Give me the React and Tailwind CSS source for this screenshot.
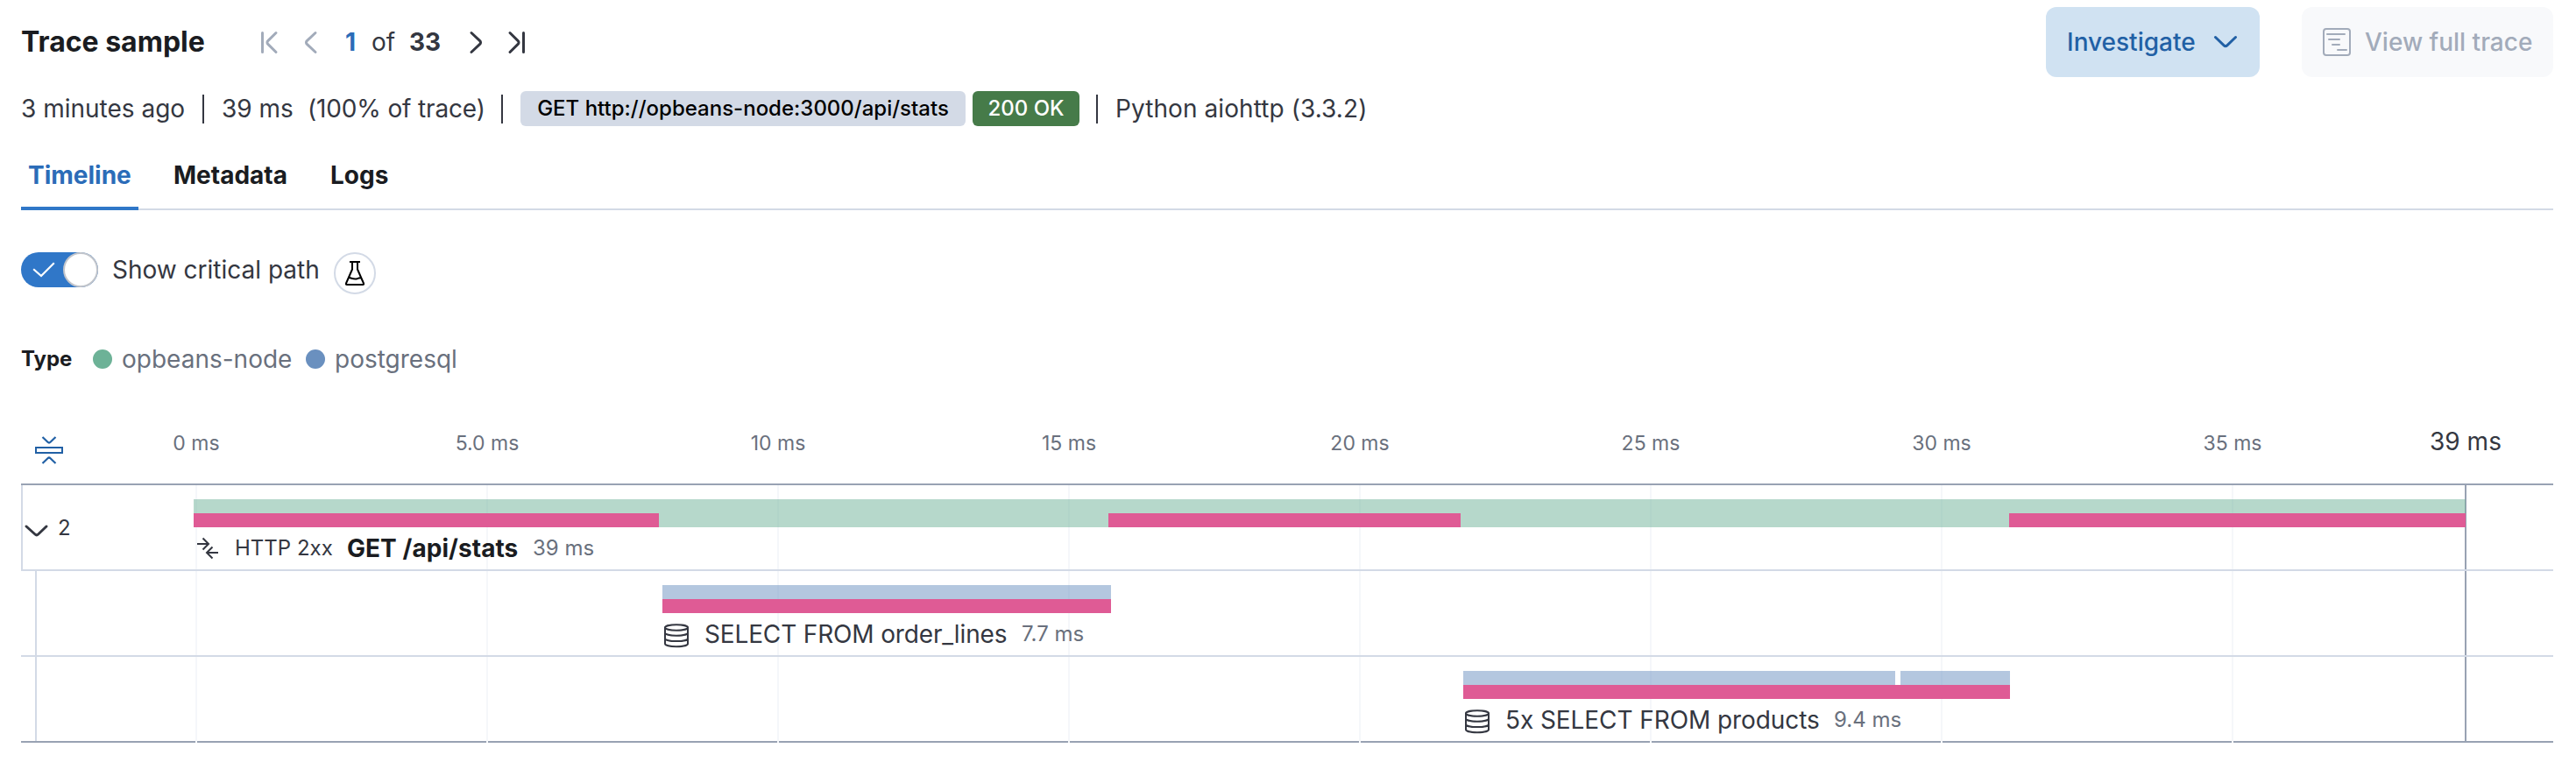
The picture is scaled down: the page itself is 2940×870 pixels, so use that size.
import React from "react";

const ticks = [
  { label: "0 ms", x: 224 },
  { label: "5.0 ms", x: 556 },
  { label: "10 ms", x: 888 },
  { label: "15 ms", x: 1220 },
  { label: "20 ms", x: 1552 },
  { label: "25 ms", x: 1884 },
  { label: "30 ms", x: 2216 },
  { label: "35 ms", x: 2548 },
];

function Icon({ w, h, sw = 3, className = "", cap = "round", children }) {
  return (
    <svg
      width={w}
      height={h}
      viewBox={`0 0 ${w} ${h}`}
      fill="none"
      stroke="currentColor"
      strokeWidth={sw}
      strokeLinecap={cap}
      strokeLinejoin="round"
      className={`block shrink-0 ${className}`}
    >
      {children}
    </svg>
  );
}

function Divider() {
  return <span className="h-[33px] w-0.5 shrink-0 bg-[#343741]" />;
}

function Header() {
  return (
    <header className="flex h-20 items-center">
      <h1 className="w-[272px] whitespace-nowrap text-[32px] font-bold leading-10 text-[#1a1c21]">Trace sample</h1>
      <Icon w={24} h={32} className="text-[#a2abba]">
        <path d="M3.5 5.5v22M19 5.5 9.8 14.6a2.6 2.6 0 0 0 0 3.8L19 27.5" />
      </Icon>
      <Icon w={24} h={32} className="ml-[25px] text-[#a2abba]">
        <path d="M15 5.5 5.3 14.6a2.6 2.6 0 0 0 0 3.8L15 27.5" />
      </Icon>
      <div className="ml-[25px] flex whitespace-nowrap text-[28px] leading-10 text-[#343741]">
        <span className="w-[30px] font-bold text-[#2b6cb8]">1</span>
        <span className="w-[43px]">of</span>
        <span className="w-[66px] font-bold">33</span>
      </div>
      <Icon w={24} h={32} className="text-[#343741]">
        <path d="M5 5.5 14.7 14.6a2.6 2.6 0 0 1 0 3.8L5 27.5" />
      </Icon>
      <Icon w={24} h={32} className="ml-[20px] text-[#343741]">
        <path d="M5 5.5 14.2 14.6a2.6 2.6 0 0 1 0 3.8L5 27.5M20.5 5.5v22" />
      </Icon>
      <div className="ml-auto flex gap-12">
        <button className="flex h-20 w-[244px] items-center rounded-xl bg-[#d0e2f2] pl-6 text-[28px] font-medium text-[#2160a5]">
          <span className="w-[165px] whitespace-nowrap text-left">Investigate</span>
          <Icon w={32} h={32} sw={3}>
            <path d="M4.500 10.500 14.200 19.800a2.600 2.600 0 0 0 3.600 0L27.500 10.500" />
          </Icon>
        </button>
        <button className="flex h-20 w-[287px] items-center rounded-xl bg-[#f8f9fb] pl-6 text-[28px] font-medium text-[#a2abba]">
          <Icon w={32} h={32} sw={2}>
            <rect x="1" y="1" width="30" height="30" rx="3" />
            <path d="M5 7h20M7 13h12M11 19h8M17 25h10" />
          </Icon>
          <span className="ml-4 whitespace-nowrap">View full trace</span>
        </button>
      </div>
    </header>
  );
}

function Summary() {
  return (
    <div className="mt-4 flex h-10 items-center whitespace-nowrap text-[28px] leading-10 text-[#343741]">
      <span className="w-[207px]">3 minutes ago</span>
      <Divider />
      <span className="ml-5 w-[98px]">39 ms</span>
      <span className="w-[221px] tracking-[-0.15px]">(100% of trace)</span>
      <Divider />
      <span className="ml-5 h-10 w-[508px] rounded-md bg-[#d3dae6] text-center text-2xl font-medium leading-10 text-black">
        GET http://opbeans-node:3000/api/stats
      </span>
      <span className="ml-2 h-10 w-[122px] rounded-md bg-[#467b49] text-center text-2xl font-medium leading-10 text-white">
        200 OK
      </span>
      <span className="ml-[19px] mr-5 h-[33px] w-0.5 bg-[#343741]" />
      <span className="tracking-[0.08px]">Python aiohttp (3.3.2)</span>
    </div>
  );
}

function Tabs() {
  return (
    <nav className="mt-4 flex h-20 gap-10 whitespace-nowrap text-[28px] font-bold leading-[80px] text-[#1a1c21] shadow-[inset_0_-2px_0_#d3dae6]">
      <a className="w-[134px] px-2 text-[#2b6cb8] shadow-[inset_0_-4px_0_#3077c8]">Timeline</a>
      <a className="w-[139px]">Metadata</a>
      <a>Logs</a>
    </nav>
  );
}

function CriticalPathSwitch() {
  return (
    <div className="mt-12 flex h-12 items-start">
      <div className="flex h-10 w-[88px] items-center rounded-full bg-[#3077c8]">
        <Icon w={48} h={40} sw={2.2} cap="square" className="text-white">
          <path d="m15 20 8 7L37 13" strokeLinejoin="miter" />
        </Icon>
        <span className="size-10 rounded-full border-2 border-[#c2c5cb] bg-white" />
      </div>
      <span className="ml-4 w-[253px] whitespace-nowrap text-[28px] leading-10 text-[#343741]">Show critical path</span>
      <span className="flex size-12 items-center justify-center rounded-full border-2 border-[#d3dae6] text-black">
        <Icon w={24} h={28} sw={2} cap="square">
          <path d="M7 1h10M9 1v8.500L2 25.500c-.4 1 0 1.500 1 1.500h18c1 0 1.400-.5 1-1.500L15 9.500V1" />
          <path d="M5.500 19c4.500 1.200 6 2.200 9 1.200 1.500-.5 2-.7 4-1" />
        </Icon>
      </span>
    </div>
  );
}

function Legend() {
  return (
    <div className="mt-[54px] flex h-10 items-center whitespace-nowrap text-[28px] leading-10 text-[#69707d]">
      <span className="w-[82px] text-2xl font-bold text-[#1a1c21]">Type</span>
      <span className="size-[22px] rounded-full bg-[#6db297]" />
      <span className="ml-[11px] w-[210px]">opbeans-node</span>
      <span className="size-[22px] rounded-full bg-[#6a90bf]" />
      <span className="ml-[11px]">postgresql</span>
    </div>
  );
}

function DbIcon() {
  return (
    <Icon w={32} h={32} sw={2}>
      <ellipse cx="16" cy="8.500" rx="13" ry="3.200" />
      <path d="M3 8.500v18.500c0 1.800 5.800 3.200 13 3.200s13-1.400 13-3.200V8.500M3 14.500c0 1.800 5.800 3.200 13 3.200s13-1.400 13-3.200M3 20.900c0 1.800 5.800 3.200 13 3.200s13-1.400 13-3.200" />
    </Icon>
  );
}

/* A span on the time axis: colour on top, its critical segments underneath. */
function Bar({ left, width, color, segments, gap }) {
  return (
    <div className={`relative h-8 ${color}`} style={{ marginLeft: left, width }}>
      {gap && <span className="absolute top-0 h-4 w-1.5 bg-white" style={{ left: gap }} />}
      {segments.map(([x, w]) => (
        <span key={x} className="absolute top-4 h-4 bg-[#df5b95]" style={{ left: x, width: w }} />
      ))}
    </div>
  );
}

function Axis() {
  return (
    <div className="relative mt-[50px] h-[72px]">
      <Icon w={32} h={32} sw={2.2} className="ml-4 translate-y-[18px] text-[#2160a5]" cap="butt">
        <path d="m8.500 1 6 5.800a2.200 2.200 0 0 0 3 0l6-5.800M8.500 31l6-5.800a2.200 2.200 0 0 1 3 0l6 5.800" />
        <rect x="1" y="13" width="30" height="6" strokeWidth="2" strokeLinejoin="miter" />
      </Icon>
      {ticks.map((t) => (
        <span
          key={t.label}
          className="absolute top-[10px] -translate-x-1/2 whitespace-nowrap text-[23px] leading-8 text-[#69707d]"
          style={{ left: t.x - 24 }}
        >
          {t.label}
        </span>
      ))}
      <span className="absolute left-[2790px] top-2 -translate-x-1/2 whitespace-nowrap text-[28px] leading-8 text-[#343741]">
        39 ms
      </span>
    </div>
  );
}

function Waterfall() {
  return (
    <section className="relative h-[296px] border-y-2 border-[#98a2b3]">
      <div className="absolute inset-x-0 top-0 h-[294px]">
        {ticks.map((t) => (
          <span key={t.label} className="absolute inset-y-0 w-0.5 bg-[#f5f7fa]" style={{ left: t.x - 25 }} />
        ))}
        <span className="absolute left-[2789px] top-0 h-[292px] w-0.5 bg-[#98a2b3]" />
      </div>

      <div className="relative flex h-[98px] border-b-2 border-l-2 border-[#d3dae6]">
        <div className="flex w-[195px] items-center pt-1 text-2xl leading-8 text-[#343741]">
          <Icon w={32} h={32} sw={3} className="translate-y-[2px]">
            <path d="m4 11 10 9a2.600 2.600 0 0 0 3.600 0l9.400-9" />
          </Icon>
          <span className="ml-2 -translate-y-px">2</span>
        </div>
        <div className="pt-4">
          <Bar
            left={0}
            width={2593}
            color="bg-[#6db297]/50"
            segments={[
              [0, 531],
              [1044, 402],
              [2072, 521],
            ]}
          />
          <div className="flex h-12 items-center whitespace-nowrap text-2xl leading-[42px] text-[#343741]">
            <Icon w={32} h={32} sw={2} cap="butt" className="-translate-y-px">
              <path d="M4 12h13M10.500 5.500 17 12l-6.500 6.500M28 22H15M21.500 15.500 15 22l6.500 6.500" strokeLinejoin="miter" />
            </Icon>
            <span className="ml-[15px] w-[128px]">HTTP 2xx</span>
            <span className="w-[212px] text-[28px] font-bold leading-[42px] tracking-[0.05px] text-[#1a1c21]">
              GET /api/stats
            </span>
            <span className="text-[#69707d]">39 ms</span>
          </div>
        </div>
      </div>

      <div className="relative flex h-[98px] border-b-2 border-[#d3dae6] pl-4">
        <div className="border-l-2 border-[#d3dae6] pt-4">
          <Bar left={714} width={512} color="bg-[#6a90bf]/50" segments={[[0, 512]]} />
          <div className="ml-[714px] flex h-12 items-center whitespace-nowrap text-[28px] text-[#343741]">
            <DbIcon />
            <span className="ml-4 w-[362px] tracking-[-0.15px]">SELECT FROM order_lines</span>
            <span className="text-2xl text-[#69707d]">7.7 ms</span>
          </div>
        </div>
      </div>

      <div className="relative flex h-24 pl-4">
        <div className="border-l-2 border-[#d3dae6] pt-4">
          <Bar left={1628} width={624} color="bg-[#6a90bf]/50" segments={[[0, 624]]} gap={493} />
          <div className="ml-[1628px] flex h-12 items-center whitespace-nowrap text-[28px] text-[#343741]">
            <DbIcon />
            <span className="ml-4 w-[375px] tracking-[-0.08px]">5x SELECT FROM products</span>
            <span className="text-2xl text-[#69707d]">9.4 ms</span>
          </div>
        </div>
      </div>
    </section>
  );
}

export default function App() {
  return (
    <main className="h-[870px] w-[2940px] overflow-hidden bg-white pl-6 pr-[26px] pt-2 font-['Inter',sans-serif]">
      <Header />
      <Summary />
      <Tabs />
      <CriticalPathSwitch />
      <Legend />
      <Axis />
      <Waterfall />
    </main>
  );
}
